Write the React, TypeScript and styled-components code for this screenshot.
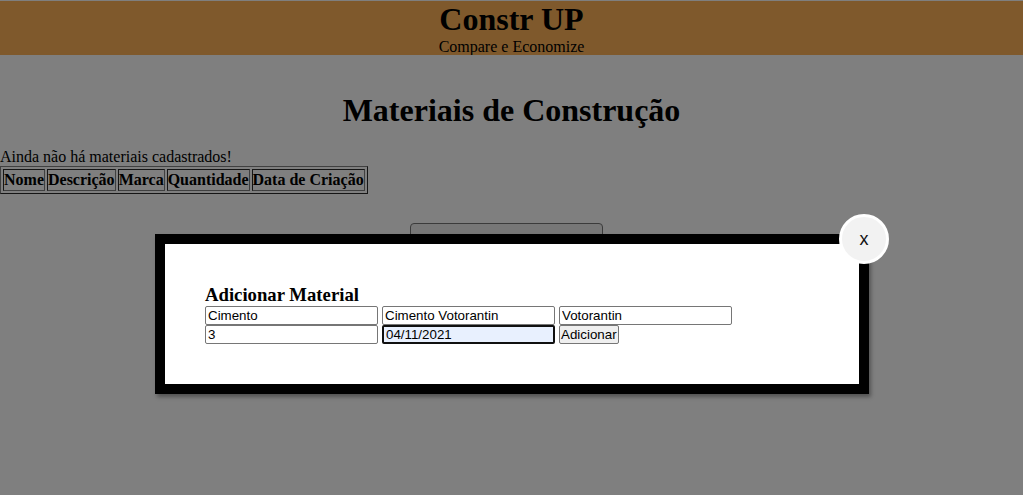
import styled, { createGlobalStyle } from "styled-components"

const Global = createGlobalStyle`
    body {
        margin: 0;
        background: #ffffff;
        font-family: "Liberation Serif", "Times New Roman", serif;
        color: #000;
    }
`

const Page = styled.div`
    position: relative;
    min-height: 495px;
    padding-top: 1px;
`

const Header = styled.header`
    background: #feb358;
    text-align: center;
    height: 54px;
    overflow: hidden;
    h1 {
        margin: 0;
        font-size: 32px;
        line-height: 37px;
    }
    p {
        margin: 0;
        font-size: 16px;
        line-height: 18px;
    }
`

const Title = styled.h1`
    text-align: center;
    font-size: 32px;
    line-height: 37px;
    margin: 37px 0 19px;
`

const Empty = styled.p`
    margin: 0;
    font-size: 16px;
    line-height: 18px;
`

const Table = styled.table`
    border: 1px outset #808080;
    border-spacing: 2px;
    th {
        border: 1px inset #808080;
        padding: 1px 0;
        font-size: 16px;
        line-height: 18px;
    }
`

const Actions = styled.div`
    display: flex;
    justify-content: center;
    padding-right: 11px;
    margin-top: 29px;
`

const OpenButton = styled.button`
    width: 193px;
    height: 40px;
    border: 1px solid #767676;
    border-radius: 4px;
    background: #efefef;
`

const Overlay = styled.div`
    position: absolute;
    inset: 0;
    background: rgba(0, 0, 0, 0.5);
`

const Modal = styled.div`
    position: absolute;
    left: 155px;
    top: 234px;
    width: 714px;
    box-sizing: border-box;
    border: 10px solid #000;
    background: #fff;
    padding: 40px;
    box-shadow: 2px 3px 4px rgba(0, 0, 0, 0.35);
`

const Close = styled.button`
    position: absolute;
    right: -30px;
    top: -30px;
    width: 50px;
    height: 50px;
    border-radius: 50%;
    border: 3px solid #fff;
    background: #f2f2f2;
    font-family: "Liberation Sans", Arial, sans-serif;
    font-size: 18px;
    color: #111;
    padding: 0;
`

const FormTitle = styled.h3`
    margin: 0;
    font-size: 18.72px;
    line-height: 22px;
`

const Fields = styled.div`
    display: flex;
    flex-wrap: wrap;
    column-gap: 4px;
    row-gap: 0;
`

const Field = styled.input<{ $focused?: boolean }>`
    box-sizing: border-box;
    width: 173px;
    height: 19px;
    padding: 0 2px;
    border: ${({ $focused }) => ($focused ? "2px solid #101010" : "1px solid #767676")};
    border-radius: 2px;
    background: ${({ $focused }) => ($focused ? "#e8f0fe" : "#fff")};
    font-family: "Liberation Sans", Arial, sans-serif;
    font-size: 13.33px;
    color: #000;
    outline: none;
`

const Submit = styled.button`
    box-sizing: border-box;
    height: 19px;
    padding: 0 1px;
    border: 1px solid #767676;
    border-radius: 2px;
    background: #efefef;
    font-family: "Liberation Sans", Arial, sans-serif;
    font-size: 13.33px;
    color: #000;
`

export default function App() {
    return (
        <Page>
            <Global />
            <Header>
                <h1>Constr UP</h1>
                <p>Compare e Economize</p>
            </Header>
            <Title>Materiais de Construção</Title>
            <Empty>Ainda não há materiais cadastrados!</Empty>
            <Table>
                <thead>
                    <tr>
                        <th>Nome</th>
                        <th>Descrição</th>
                        <th>Marca</th>
                        <th>Quantidade</th>
                        <th>Data de Criação</th>
                    </tr>
                </thead>
            </Table>
            <Actions>
                <OpenButton />
            </Actions>
            <Overlay />
            <Modal>
                <Close>x</Close>
                <FormTitle>Adicionar Material</FormTitle>
                <Fields>
                    <Field defaultValue="Cimento" />
                    <Field defaultValue="Cimento Votorantin" />
                    <Field defaultValue="Votorantin" />
                    <Field defaultValue="3" />
                    <Field $focused defaultValue="04/11/2021" />
                    <Submit>Adicionar</Submit>
                </Fields>
            </Modal>
        </Page>
    )
}
